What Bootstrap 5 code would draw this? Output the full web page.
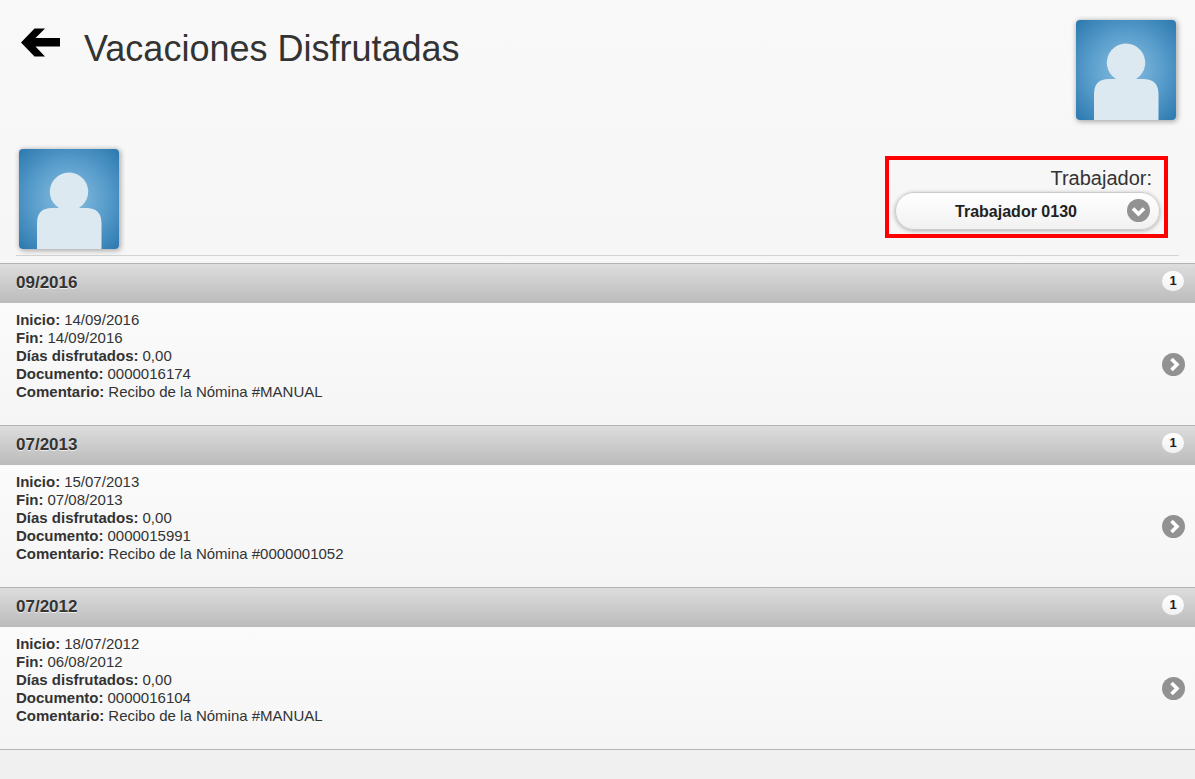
<!DOCTYPE html>
<html lang="es">
<head>
<meta charset="utf-8">
<meta name="viewport" content="width=device-width, initial-scale=1">
<title>Vacaciones Disfrutadas</title>
<link href="https://cdn.jsdelivr.net/npm/bootstrap@5.3.0/dist/css/bootstrap.min.css" rel="stylesheet">
<style>
  body {
    font-family: "Liberation Sans", Arial, sans-serif;
    color: #333;
    background: linear-gradient(#f9f9f9, #f0f0f0) #f0f0f0;
  }
  .page-title { font-size: 36px; line-height: 42px; }
  .back-arrow svg, .avatar { display: block; }
  .back-arrow { padding: 8px 0 0 2px; }
  .avatar {
    width: 100px;
    height: 100px;
    border-radius: 4px;
    background: radial-gradient(circle at center, #8abfe0, #5b9fcd 50%, #2b78ae);
    box-shadow: 1px 1px 5px 1px rgba(0, 0, 0, .3);
  }
  .top-bar { padding: 20px 19px 0; min-height: 149px; }
  .person-bar { margin: 0 16px; padding: 0 0 6px 3px; border-bottom: 1px solid #d3d3d3; }
  .worker-box {
    width: 283px;
    margin: 7px 11px 0 0;
    padding: 7px 4px 4px 6px;
    border: 4px solid #f00;
  }
  .worker-box label { font-size: 20px; line-height: 22px; padding-right: 8px; }
  .worker-select {
    height: 38px;
    margin-top: 3px;
    padding: 1px 60px 0 37px;
    font-size: 16px;
    font-weight: 700;
    color: #222;
    text-align: center;
    text-align-last: center;
    appearance: none;
    border: 1px solid #ccc;
    border-radius: 19px;
    background: linear-gradient(#fff, #f1f1f1);
    box-shadow: 0 1px 4px rgba(0, 0, 0, .3);
  }
  .select-icon { right: 10px; top: 7px; }
  .periods { margin-top: 7px; border-bottom: 1px solid #b3b3b3; }
  .period-head {
    height: 40px;
    padding: 0 11px 2px 16px;
    border-top: 1px solid #b3b3b3;
    background: linear-gradient(#ddd, #bbb);
    text-shadow: 0 1px 0 #eee;
  }
  .period-head h2 { font-size: 17px; line-height: 36px; font-weight: 700; }
  .count {
    width: 22px;
    height: 20px;
    margin-bottom: 4px;
    font-size: 13px;
    line-height: 20px;
    color: #222;
    border-radius: 10px;
    background: linear-gradient(#fff, #f1f1f1);
  }
  .period-item {
    height: 122px;
    padding: 0 10px 0 16px;
    font-size: 15px;
    line-height: 18px;
    color: #333;
    background: linear-gradient(#fbfbfb, #f5f5f5);
  }
  .period-item .lines { height: 106px; }
  .period-item dt, .period-item dd { margin: 0; }
</style>
</head>
<body class="min-vh-100">
<svg class="d-none" aria-hidden="true">
  <symbol id="person" viewBox="0 0 100 100">
    <path d="M18 100V74Q18 59 33 59H40A19.200 19.200 0 1 1 60 59H67Q82.500 59 82.500 74V100Z" fill="#dce9f1"/>
  </symbol>
  <symbol id="chevron" viewBox="0 0 23 23">
    <circle cx="11.500" cy="11.500" r="11.500" fill="#929292"/>
    <path d="M9.500 6 15 11.500 9.500 17" fill="none" stroke="#fff" stroke-width="3.600"/>
  </symbol>
</svg>

<header class="top-bar d-flex align-items-start">
  <a href="#" class="back-arrow" aria-label="Volver">
    <svg width="39" height="29" viewBox="0 0 39 29"><path d="M0 14.500 13.500 .5H24L14.500 10H39V18.500H14.500L24 28.500H13.500Z"/></svg>
  </a>
  <h1 class="page-title fw-normal mb-0 ms-4 mt-2 flex-grow-1">Vacaciones Disfrutadas</h1>
  <svg class="avatar flex-shrink-0" role="img" aria-label="Usuario"><use href="#person"/></svg>
</header>

<main>
  <section class="person-bar d-flex justify-content-between align-items-start">
    <svg class="avatar flex-shrink-0" role="img" aria-label="Trabajador"><use href="#person"/></svg>
    <div class="worker-box">
      <label for="worker" class="d-block text-end">Trabajador:</label>
      <div class="position-relative">
        <select id="worker" class="worker-select w-100 d-block"><option>Trabajador 0130</option></select>
        <svg class="select-icon position-absolute pe-none" width="23" height="23" viewBox="0 0 23 23" aria-hidden="true"><g transform="rotate(90 11.500 11.500)"><use href="#chevron" width="23" height="23"/></g></svg>
      </div>
    </div>
  </section>

  <div class="periods">
    <section>
      <div class="period-head d-flex align-items-center justify-content-between"><h2 class="mb-0">09/2016</h2><span class="count text-center fw-bold">1</span></div>
      <a href="#" class="period-item d-flex align-items-center justify-content-between text-decoration-none">
        <dl class="lines mb-0">
          <div class="d-flex gap-1"><dt>Inicio:</dt><dd>14/09/2016</dd></div>
          <div class="d-flex gap-1"><dt>Fin:</dt><dd>14/09/2016</dd></div>
          <div class="d-flex gap-1"><dt>Días disfrutados:</dt><dd>0,00</dd></div>
          <div class="d-flex gap-1"><dt>Documento:</dt><dd>0000016174</dd></div>
          <div class="d-flex gap-1"><dt>Comentario:</dt><dd>Recibo de la Nómina #MANUAL</dd></div>
        </dl>
        <svg class="flex-shrink-0" width="23" height="23" aria-hidden="true"><use href="#chevron"/></svg>
      </a>
    </section>
    <section>
      <div class="period-head d-flex align-items-center justify-content-between"><h2 class="mb-0">07/2013</h2><span class="count text-center fw-bold">1</span></div>
      <a href="#" class="period-item d-flex align-items-center justify-content-between text-decoration-none">
        <dl class="lines mb-0">
          <div class="d-flex gap-1"><dt>Inicio:</dt><dd>15/07/2013</dd></div>
          <div class="d-flex gap-1"><dt>Fin:</dt><dd>07/08/2013</dd></div>
          <div class="d-flex gap-1"><dt>Días disfrutados:</dt><dd>0,00</dd></div>
          <div class="d-flex gap-1"><dt>Documento:</dt><dd>0000015991</dd></div>
          <div class="d-flex gap-1"><dt>Comentario:</dt><dd>Recibo de la Nómina #0000001052</dd></div>
        </dl>
        <svg class="flex-shrink-0" width="23" height="23" aria-hidden="true"><use href="#chevron"/></svg>
      </a>
    </section>
    <section>
      <div class="period-head d-flex align-items-center justify-content-between"><h2 class="mb-0">07/2012</h2><span class="count text-center fw-bold">1</span></div>
      <a href="#" class="period-item d-flex align-items-center justify-content-between text-decoration-none">
        <dl class="lines mb-0">
          <div class="d-flex gap-1"><dt>Inicio:</dt><dd>18/07/2012</dd></div>
          <div class="d-flex gap-1"><dt>Fin:</dt><dd>06/08/2012</dd></div>
          <div class="d-flex gap-1"><dt>Días disfrutados:</dt><dd>0,00</dd></div>
          <div class="d-flex gap-1"><dt>Documento:</dt><dd>0000016104</dd></div>
          <div class="d-flex gap-1"><dt>Comentario:</dt><dd>Recibo de la Nómina #MANUAL</dd></div>
        </dl>
        <svg class="flex-shrink-0" width="23" height="23" aria-hidden="true"><use href="#chevron"/></svg>
      </a>
    </section>
  </div>
</main>
<script src="https://cdn.jsdelivr.net/npm/bootstrap@5.3.0/dist/js/bootstrap.bundle.min.js"></script>
</body>
</html>
